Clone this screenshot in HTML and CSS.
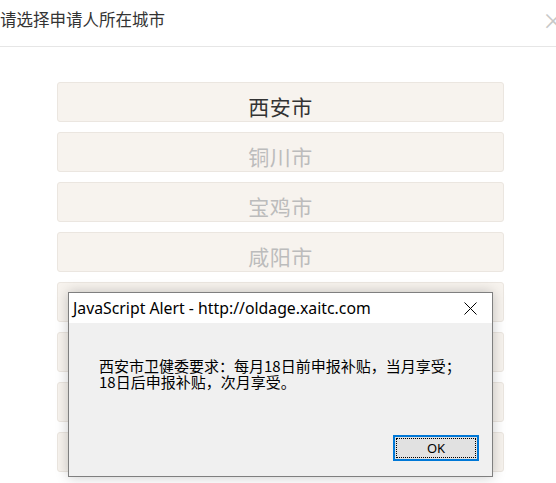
FILE: index.html
```html
<!DOCTYPE html>
<html lang="zh-CN">
<head>
<meta charset="utf-8">
<title>请选择申请人所在城市</title>
<link rel="stylesheet" href="styles.css">
</head>
<body>
<div class="page">
  <header class="header">
    <span class="header-title">请选择申请人所在城市</span>
    <span class="header-close">×</span>
  </header>
  <ul class="city-list">
    <li class="city city-active">西安市</li>
    <li class="city">铜川市</li>
    <li class="city">宝鸡市</li>
    <li class="city">咸阳市</li>
    <li class="city">渭南市</li>
    <li class="city">延安市</li>
    <li class="city">汉中市</li>
    <li class="city">榆林市</li>
  </ul>
</div>
<div class="alert">
  <div class="alert-titlebar">
    <span class="alert-title">JavaScript Alert - http://oldage.xaitc.com</span>
    <svg class="alert-x" width="13" height="13" viewBox="0 0 13 13"><path d="M0.5 0.5 L12.5 12.5 M12.5 0.5 L0.5 12.5" stroke="#000" stroke-width="1" fill="none"/></svg>
  </div>
  <div class="alert-body">
    <p class="alert-msg">西安市卫健委要求：每月18日前申报补贴，当月享受；<br>18日后申报补贴，次月享受。</p>
    <div class="alert-actions"><button class="alert-ok">OK</button></div>
  </div>
</div>
</body>
</html>
```
FILE: styles.css
```css
html, body {
  margin: 0;
  padding: 0;
  background: #fff;
  overflow: hidden;
  width: 556px;
  height: 483px;
}
body {
  font-family: "Noto Sans CJK SC", "Noto Sans", sans-serif;
  position: relative;
}
.header {
  height: 47px;
  border-bottom: 1px solid #e6e6e6;
  display: flex;
  justify-content: space-between;
  align-items: flex-start;
  box-sizing: border-box;
  padding-top: 7px;
}
.header-title {
  font-size: 16.5px;
  line-height: 24px;
  color: #333;
}
.header-close {
  font-size: 22px;
  line-height: 24px;
  color: #c8c8c8;
  margin-right: -8px;
}
.city-list {
  list-style: none;
  margin: 35px 0 0 57px;
  padding: 0;
  width: 447px;
  display: flex;
  flex-direction: column;
  gap: 10px;
}
.city {
  height: 40px;
  box-sizing: border-box;
  background: #f7f3ee;
  border: 1px solid #ebe6e0;
  border-radius: 3px;
  display: flex;
  align-items: center;
  justify-content: center;
  padding-top: 7px;
  font-size: 21px;
  letter-spacing: 0.5px;
  color: #bcbcbc;
}
.city-active {
  color: #333;
}
.alert {
  position: absolute;
  left: 68px;
  top: 292px;
  width: 425px;
  height: 185px;
  box-sizing: border-box;
  border: 1px solid #7f7f7f;
  background: #f0f0f0;
  box-shadow: 0 0 12px rgba(0,0,0,0.22);
  display: flex;
  flex-direction: column;
}
.alert-titlebar {
  height: 30px;
  background: #fff;
  display: flex;
  align-items: center;
  justify-content: space-between;
  padding: 0 15px 0 4px;
}
.alert-title {
  font-family: "Noto Sans", "Open Sans", sans-serif;
  font-size: 15.8px;
  color: #000;
}
.alert-x {
  display: block;
}
.alert-body {
  flex: 1;
  display: flex;
  flex-direction: column;
}
.alert-msg {
  margin: 35px 0 0 30px;
  font-size: 15px;
  line-height: 16px;
  color: #000;
}
.alert-actions {
  margin-top: auto;
  display: flex;
  justify-content: flex-end;
  padding: 0 13px 15px 0;
}
.alert-ok {
  width: 86px;
  height: 26px;
  box-sizing: border-box;
  border: 2px solid #0078d7;
  background: #e1e1e1;
  font-family: "Noto Sans", sans-serif;
  font-size: 13px;
  color: #000;
  outline: 1px dotted #000;
  outline-offset: -4px;
  padding: 0;
}
```
